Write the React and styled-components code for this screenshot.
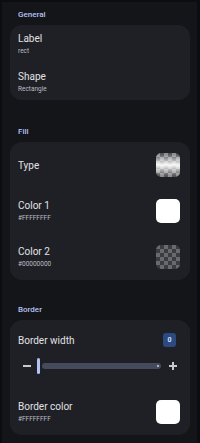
import React from "react";
import styled, { createGlobalStyle, css } from "styled-components";

const Global = createGlobalStyle`
  html, body {
    margin: 0;
    padding: 0;
    background: #0b0c0f;
    font-family: Roboto, "Liberation Sans", sans-serif;
  }
  * { box-sizing: border-box; }
`;

const Frame = styled.div`
  width: 200px;
  height: 443px;
  background: #141519;
  border: 2px solid #0c0d10;
  border-right-width: 3px;
  border-bottom-width: 0;
  padding: 0 7px 0 8px;
  overflow: hidden;
`;

const Section = styled.section`
  margin-bottom: ${({ $gap }) => $gap ?? 19}px;
`;

const Header = styled.div`
  padding: 7px 8px 4px;
  height: 23px;
  line-height: 12px;
  font-size: 8px;
  font-weight: 500;
  color: #b6c2f2;
`;

const Card = styled.div`
  background: #1f2025;
  border-radius: 12px;
`;

const Row = styled.div`
  display: flex;
  align-items: center;
  justify-content: space-between;
  min-height: ${({ $h }) => $h || 38}px;
  padding: 0 10px 0 8px;
`;

const TextBlock = styled.div`
  display: flex;
  flex-direction: column;
  gap: 2px;
`;

const Label = styled.div`
  font-size: 10px;
  line-height: 13px;
  color: #e2e2e6;
`;

const Sub = styled.div`
  font-size: 6.5px;
  line-height: 9px;
  color: #bcbdc3;
`;

const checker = (a, b, s) => css`
  background-color: ${a};
  background-image:
    linear-gradient(45deg, ${b} 25%, transparent 25%, transparent 75%, ${b} 75%),
    linear-gradient(45deg, ${b} 25%, transparent 25%, transparent 75%, ${b} 75%);
  background-size: ${s * 2}px ${s * 2}px;
  background-position: 0 0, ${s}px ${s}px;
`;

const Swatch = styled.div`
  width: 24px;
  height: 24px;
  border-radius: 5px;
  flex-shrink: 0;
  ${({ $kind }) =>
    $kind === "white" &&
    css`
      background: #ffffff;
    `}
  ${({ $kind }) =>
    $kind === "clear" &&
    css`
      ${checker("#6a6a6e", "#3b3c40", 4)}
    `}
  ${({ $kind }) =>
    $kind === "gradient" &&
    css`
      position: relative;
      ${checker("#8e8e92", "#55565a", 4)}
      &::after {
        content: "";
        position: absolute;
        inset: 0;
        border-radius: 5px;
        background: linear-gradient(
          to bottom,
          rgba(255, 255, 255, 0) 5%,
          rgba(255, 255, 255, 0.95) 50%,
          rgba(255, 255, 255, 0) 95%
        );
      }
    `}
`;

const Badge = styled.div`
  width: 13px;
  height: 14px;
  border-radius: 3px;
  background: #2b4a7f;
  color: #d3e2ff;
  font-size: 7px;
  font-weight: 700;
  display: flex;
  align-items: center;
  justify-content: center;
`;

const SliderRow = styled.div`
  display: flex;
  align-items: center;
  height: 20px;
  margin-top: 8px;
  padding: 0 13px 0 13px;
`;

const Sign = styled.div`
  width: 8px;
  height: 8px;
  position: relative;
  flex-shrink: 0;
  &::before,
  &::after {
    content: "";
    position: absolute;
    background: #c6c9d2;
  }
  &::before {
    left: 0;
    right: 0;
    top: 3.25px;
    height: 1.5px;
  }
  &::after {
    display: ${({ $plus }) => ($plus ? "block" : "none")};
    top: 0;
    bottom: 0;
    left: 3.25px;
    width: 1.5px;
  }
`;

const Thumb = styled.div`
  width: 3px;
  height: 16px;
  border-radius: 2px;
  background: #b3c3f3;
  margin: 0 2px 0 6px;
  flex-shrink: 0;
`;

const Track = styled.div`
  flex: 1;
  height: 6px;
  border-radius: 3px;
  background: #464b5b;
  display: flex;
  align-items: center;
  justify-content: flex-end;
  padding-right: 2px;
  margin-right: 8px;
  &::after {
    content: "";
    width: 2px;
    height: 2px;
    border-radius: 1px;
    background: #c8d2f2;
  }
`;

const HeadRow = styled.div`
  display: flex;
  align-items: center;
  justify-content: space-between;
  padding: 12px 14px 0 8px;
  height: 28px;
`;

const ColorRow = styled(Row)`
  margin-top: 12px;
`;

export default function App() {
  return (
    <>
      <Global />
      <Frame>
        <Section>
          <Header>General</Header>
          <Card>
            <Row>
              <TextBlock>
                <Label>Label</Label>
                <Sub>rect</Sub>
              </TextBlock>
            </Row>
            <Row $h={37}>
              <TextBlock>
                <Label>Shape</Label>
                <Sub>Rectangle</Sub>
              </TextBlock>
            </Row>
          </Card>
        </Section>

        <Section $gap={17}>
          <Header>Fill</Header>
          <Card>
            <Row $h={46}>
              <Label>Type</Label>
              <Swatch $kind="gradient" />
            </Row>
            <Row $h={46}>
              <TextBlock>
                <Label>Color 1</Label>
                <Sub>#FFFFFFFF</Sub>
              </TextBlock>
              <Swatch $kind="white" />
            </Row>
            <Row $h={46}>
              <TextBlock>
                <Label>Color 2</Label>
                <Sub>#00000000</Sub>
              </TextBlock>
              <Swatch $kind="clear" />
            </Row>
          </Card>
        </Section>

        <Section>
          <Header>Border</Header>
          <Card>
            <HeadRow>
              <Label>Border width</Label>
              <Badge>0</Badge>
            </HeadRow>
            <SliderRow>
              <Sign />
              <Thumb />
              <Track />
              <Sign $plus />
            </SliderRow>
            <ColorRow $h={47}>
              <TextBlock>
                <Label>Border color</Label>
                <Sub>#FFFFFFFF</Sub>
              </TextBlock>
              <Swatch $kind="white" />
            </ColorRow>
          </Card>
        </Section>
      </Frame>
    </>
  );
}
